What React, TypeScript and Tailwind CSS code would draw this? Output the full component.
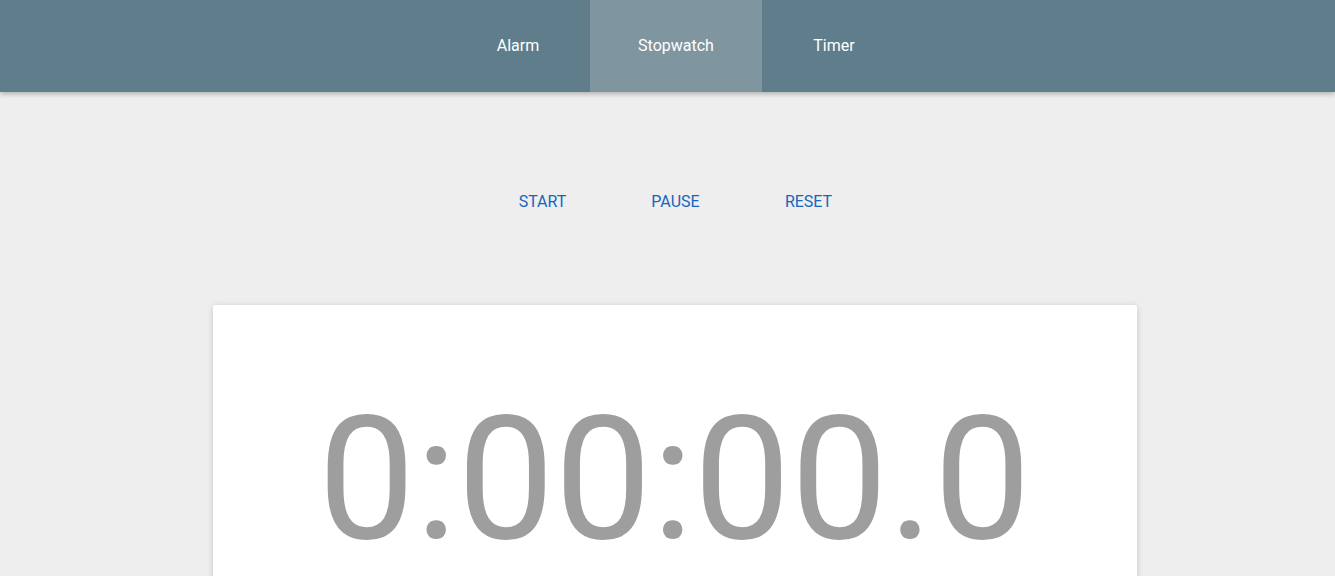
import React from "react";

export default function App() {
  const tabs = ["Alarm", "Stopwatch", "Timer"];
  return (
    <div className="min-h-[576px] bg-[#eeeeee] overflow-hidden" style={{ fontFamily: "Roboto, 'Liberation Sans', sans-serif" }}>
      <nav className="h-[92px] bg-[#607d8b] shadow-[0_2px_5px_rgba(0,0,0,0.26)] flex justify-center pl-[17px] relative z-10">
        {tabs.map((t) => (
          <div
            key={t}
            className={`flex items-center justify-center text-white text-[16px] ${t === "Stopwatch" ? "w-[172px] bg-[#7f96a0]" : "w-[144px]"}`}
          >
            {t}
          </div>
        ))}
      </nav>
      <div className="flex justify-center pl-[16px] pt-[98px] gap-0">
        {["START", "PAUSE", "RESET"].map((b) => (
          <button key={b} className="w-[133px] h-[24px] text-[16px] text-[#1565c0] flex items-center justify-center">
            {b}
          </button>
        ))}
      </div>
      <div className="flex justify-center pl-[14px] pt-[91px]">
        <div className="w-[924px] h-[280px] bg-white rounded-[2px] shadow-[0_1px_6px_rgba(0,0,0,0.16)] flex justify-center pt-[88px]">
          <div className="text-[173px] font-normal text-[#9e9e9e] leading-none">0:00:00.0</div>
        </div>
      </div>
    </div>
  );
}
